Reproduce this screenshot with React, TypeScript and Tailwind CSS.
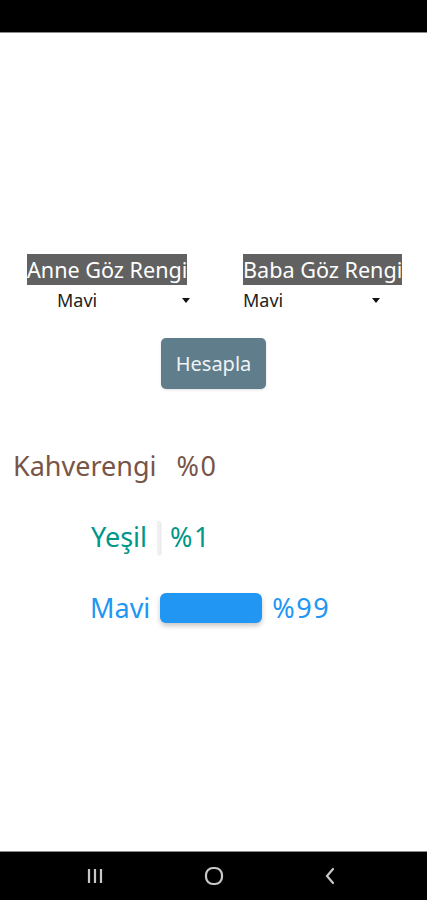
import React from "react";

const Spinner = ({ value, w }: { value: string; w: string }) => (
  <div className={`flex items-center justify-between h-[28px] pt-[2px] pr-[4px] ${w}`}>
    <span className="text-[18px] leading-[26px] text-[#222]">{value}</span>
    <span className="w-0 h-0 border-l-[4px] border-r-[4px] border-t-[5px] border-l-transparent border-r-transparent border-t-[#111]" />
  </div>
);

const ResultRow = (params: {
  label: string;
  color: string;
  pct: number;
  pad: string;
  barClass: string;
}) => {
  return (
    <div className={`flex items-center h-[40px] ${params.pad}`}>
      <span className={`text-[27px] ${params.color}`}>{params.label}</span>
      <div className={`mx-[10px] ${params.barClass}`} />
      <span className={`text-[27px] tracking-[1.5px] ${params.color}`}>%{params.pct}</span>
    </div>
  );
};

const App = () => {
  return (
    <div className="w-[427px] h-[900px] flex flex-col bg-white font-['Noto_Sans',sans-serif] overflow-hidden">
      <div className="h-[33px] bg-black border-b border-[#8a8a8a]" />

      <main className="flex-1 flex flex-col">
        <div className="mt-[221px] flex">
          <div className="ml-[27px] w-[161px] flex flex-col items-start">
            <span className="bg-[#616161] text-white text-[21.6px] leading-[31px] whitespace-nowrap">
              Anne Göz Rengi
            </span>
            <div className="ml-[30px]">
              <Spinner value="Mavi" w="w-[137px]" />
            </div>
          </div>
          <div className="ml-[55px] flex flex-col items-start">
            <span className="bg-[#616161] text-white text-[21.6px] leading-[31px] whitespace-nowrap">
              Baba Göz Rengi
            </span>
            <Spinner value="Mavi" w="w-[141px]" />
          </div>
        </div>

        <button className="mt-[25px] mx-auto w-[105px] h-[51px] rounded-[5px] bg-[#607d8b] text-[#eef3f5] text-[20px] shadow-sm">
          Hesapla
        </button>

        <div className="mt-[57px] flex flex-col gap-[31px]">
          <ResultRow label="Kahverengi" color="text-[#795548]" pct={0} pad="pl-[13px]" barClass="w-0" />
          <ResultRow
            label="Yeşil"
            color="text-[#009688]"
            pct={1}
            pad="pl-[91px]"
            barClass="w-[3px] h-[33px] bg-[#f0f0f0] shadow-[1px_1px_2px_rgba(0,0,0,0.12)]"
          />
          <ResultRow
            label="Mavi"
            color="text-[#2196f3]"
            pct={99}
            pad="pl-[90px]"
            barClass="w-[102px] h-[30px] rounded-[6px] bg-[#2196f3] shadow-[0_3px_5px_rgba(0,0,0,0.22)]"
          />
        </div>
      </main>

      <nav className="h-[49px] bg-black border-t border-[#8a8a8a] flex items-center justify-center gap-[100px] pr-[6px]">
        <svg width="18" height="16" viewBox="0 0 18 16" fill="none" stroke="#c8c8c8" strokeWidth="2.2">
          <path d="M3 1v14M9 1v14M15 1v14" />
        </svg>
        <svg width="20" height="20" viewBox="0 0 20 20" fill="none" stroke="#c8c8c8" strokeWidth="2.2">
          <rect x="2" y="2" width="16" height="16" rx="7" />
        </svg>
        <svg width="12" height="18" viewBox="0 0 12 18" fill="none" stroke="#c8c8c8" strokeWidth="2.2" strokeLinecap="round">
          <path d="M9 2L3 9l6 7" />
        </svg>
      </nav>
    </div>
  );
};

export default App;
